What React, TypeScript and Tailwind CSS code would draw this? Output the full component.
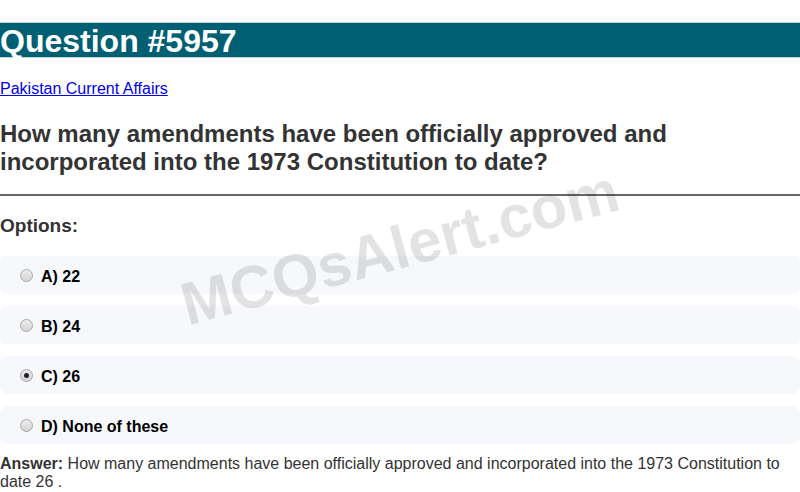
const OPTIONS = [
  { key: "A", label: "22" },
  { key: "B", label: "24" },
  { key: "C", label: "26" },
  { key: "D", label: "None of these" },
];

function Radio({ checked }: { checked: boolean }) {
  return (
    <span className="flex h-[13px] w-[13px] shrink-0 items-center justify-center rounded-full border border-[#a8a8a8] bg-gradient-to-b from-[#ececec] to-[#d4d4d4]">
      {checked && <span className="h-[5px] w-[5px] rounded-full bg-[#222]" />}
    </span>
  );
}

export default function App() {
  return (
    <div className="relative min-h-screen overflow-hidden bg-white pt-[22px] font-['Liberation_Sans',Arial,sans-serif] text-[#333]">
      <h1 className="h-[36px] border-y border-[#c9d6da] bg-[#005f73] text-[32px] font-bold leading-[36px] text-white">
        Question #5957
      </h1>

      <a href="#" className="mt-[22px] block text-[16px] leading-[18px] text-[#0000ee] underline">
        Pakistan Current Affairs
      </a>

      <h2 className="mt-[22px] text-[24px] font-bold leading-[28px]">
        How many amendments have been officially approved and incorporated into the 1973 Constitution to date?
      </h2>

      <hr className="mt-[18px] border-t-2 border-[#666]" />

      <h3 className="mt-[19px] text-[19px] font-bold leading-[22px]">Options:</h3>

      <div className="mt-[19px] flex flex-col gap-[12px]">
        {OPTIONS.map((o) => (
          <label key={o.key} className="flex h-[38px] items-center rounded-lg bg-[#f7f8fc] pl-[20px] pt-[1px]">
            <Radio checked={o.key === "C"} />
            <span className="ml-[8px] pt-[2px] text-[16px] font-bold text-black">
              {o.key}) {o.label}
            </span>
          </label>
        ))}
      </div>

      <p className="mt-[11px] text-[16px] leading-[18px]">
        <b>Answer:</b> How many amendments have been officially approved and incorporated into the 1973 Constitution to
        date 26 .
      </p>

      {/* watermark */}
      <div className="pointer-events-none absolute left-[400px] top-[248px] -translate-x-1/2 -translate-y-1/2 -rotate-[15deg] whitespace-nowrap text-[60px] font-bold leading-none text-black/[0.11]">
        MCQsAlert.com
      </div>
    </div>
  );
}
